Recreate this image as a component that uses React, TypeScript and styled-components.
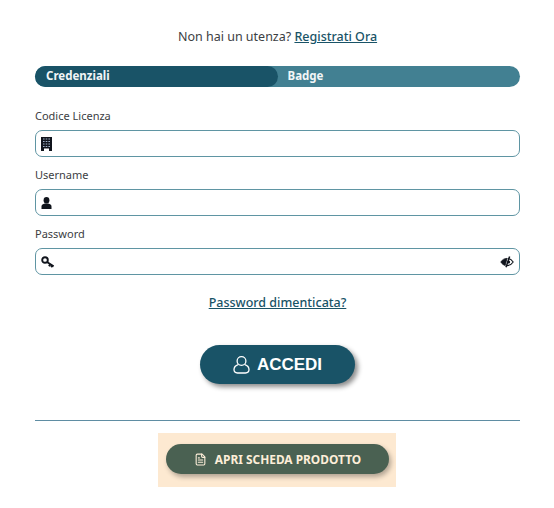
import React from 'react';
import styled, { createGlobalStyle } from 'styled-components';
import { LuFileText } from 'react-icons/lu';

const palette = {
  navy: '#195367',
  teal: '#428092',
  border: '#5f95a3',
  text: '#3c4043',
  ink: '#10141c',
  green: '#4a6152',
  peach: '#fde9d1',
  cream: '#fdeed9',
};

const GlobalStyle = createGlobalStyle`
  html, body {
    margin: 0;
    padding: 0;
    background: #fff;
    font-family: "Noto Sans", "Open Sans", sans-serif;
  }
`;

const Page = styled.div`
  width: 554px;
  height: 508px;
  box-sizing: border-box;
  padding: 28px 34px 0 35px;
  overflow: hidden;
`;

const SignupLine = styled.p`
  margin: 0;
  height: 17px;
  line-height: 17px;
  font-size: 12.5px;
  text-align: center;
  color: ${palette.text};
  a {
    color: ${palette.navy};
    font-weight: 500;
    text-decoration: underline;
  }
`;

const Tabs = styled.div`
  display: flex;
  height: 21px;
  margin: 21px 0 21px;
  border-radius: 11px;
  background: ${palette.teal};
`;

const Tab = styled.div<{ $active?: boolean }>`
  width: 243px;
  box-sizing: border-box;
  padding-left: ${(p) => (p.$active ? '11px' : '10px')};
  border-radius: 11px;
  background: ${(p) => (p.$active ? palette.navy : 'transparent')};
  color: #f2f6f7;
  font-size: 11.5px;
  font-weight: 700;
  line-height: 20px;
`;

const Field = styled.div`
  margin-bottom: 10px;
`;

const Label = styled.label`
  display: block;
  height: 15px;
  margin-bottom: 7px;
  line-height: 15px;
  font-size: 11px;
  color: ${palette.text};
`;

const InputBox = styled.div`
  display: flex;
  align-items: center;
  justify-content: space-between;
  height: 27px;
  box-sizing: border-box;
  padding: 0 5px;
  border: 1px solid ${palette.border};
  border-radius: 7px;
  color: ${palette.ink};
`;

const LinkRow = styled.div`
  margin-top: 19px;
  height: 17px;
  line-height: 17px;
  text-align: center;
  font-size: 12.5px;
  a {
    color: ${palette.navy};
    font-weight: 500;
    text-decoration: underline;
  }
`;

const ButtonRow = styled.div`
  display: flex;
  justify-content: center;
  margin-top: 34px;
`;

const LoginButton = styled.button`
  display: flex;
  align-items: center;
  justify-content: center;
  gap: 7px;
  width: 155px;
  height: 39px;
  padding: 0;
  border: 0;
  border-radius: 20px;
  background: ${palette.navy};
  color: #fff;
  font-family: "Liberation Sans", Arial, sans-serif;
  font-size: 17px;
  font-weight: 700;
  box-shadow: 3px 3px 5px rgba(0, 0, 0, 0.45);
`;

const Divider = styled.hr`
  height: 1px;
  margin: 36px 0 12px;
  border: 0;
  background: #5f8da3;
`;

const Promo = styled.div`
  display: flex;
  justify-content: center;
  padding-right: 1px;
`;

const PromoBox = styled.div`
  width: 238px;
  height: 54px;
  box-sizing: border-box;
  padding: 11px 7px 0 8px;
  background: ${palette.peach};
`;

const PromoButton = styled.button`
  display: flex;
  align-items: center;
  justify-content: center;
  gap: 8px;
  width: 223px;
  height: 30px;
  padding: 0;
  border: 0;
  border-radius: 15px;
  background: ${palette.green};
  color: ${palette.cream};
  font-family: "Noto Sans", sans-serif;
  font-size: 11.9px;
  font-weight: 700;
  box-shadow: 2px 3px 5px rgba(0, 0, 0, 0.3);
`;

const UserOutline = () => (
  <svg width="17" height="19" viewBox="0 0 17 19" fill="none" stroke="currentColor" strokeWidth="1.3">
    <circle cx="8.5" cy="6" r="4.4" />
    <path d="M5.2 9.6C2.6 10.4 1 12.3 1 14.6 1 16.8 2.4 18 4.5 18h8c2.1 0 3.5-1.2 3.5-3.4 0-2.3-1.6-4.2-4.2-5" />
  </svg>
);

const BuildingIcon = () => (
  <svg width="11" height="14" viewBox="0 0 11 14">
    <rect width="11" height="14" fill="currentColor" />
    <path
      d="M2 2h7M2 4.5h7M2 7h7M2 9.5h7"
      stroke="#9fb0c8"
      strokeWidth="1"
      strokeDasharray="1.6 1.1"
    />
    <rect x="3" y="11.5" width="5" height="2.5" fill="#fff" />
  </svg>
);

const UserIcon = () => (
  <svg width="11" height="12" viewBox="0 0 11 12" fill="currentColor">
    <ellipse cx="5.5" cy="3.2" rx="2.9" ry="3.2" />
    <path d="M0.5 12V9.6C0.5 7.8 2 7 3.8 6.6h3.4C9 7 10.5 7.8 10.5 9.6V12z" />
  </svg>
);

const KeyIcon = () => (
  <svg width="14" height="12" viewBox="0 0 14 12" fill="none" stroke="currentColor">
    <circle cx="4" cy="4" r="2.8" strokeWidth="1.9" />
    <path d="M6 6l6.6 4.4M9.2 8.2l-1.2 2M11.2 9.5l-1 1.7" strokeWidth="1.9" />
  </svg>
);

const EyeSlashIcon = () => (
  <svg width="14" height="12" viewBox="0 0 14 12" fill="none" stroke="currentColor">
    <path d="M0.8 6C2.4 3.6 4.4 2.4 7 2.4L5.2 9.4C3.4 9 1.9 7.8 0.8 6z" fill="currentColor" strokeWidth="0.8" />
    <path d="M7.6 2.5C10 2.6 11.8 3.9 13.2 6 11.8 8.2 9.8 9.5 7 9.6" strokeWidth="1.1" />
    <path d="M9.6 0.6L6 11.2" strokeWidth="1.5" />
    <circle cx="8.6" cy="6" r="1.5" fill="currentColor" stroke="none" />
  </svg>
);

const App: React.FC = () => {
  return (
    <Page>
      <GlobalStyle />
      <SignupLine>
        Non hai un utenza? <a href="#">Registrati Ora</a>
      </SignupLine>
      <Tabs>
        <Tab $active>Credenziali</Tab>
        <Tab>Badge</Tab>
      </Tabs>
      <Field>
        <Label>Codice Licenza</Label>
        <InputBox>
          <BuildingIcon />
        </InputBox>
      </Field>
      <Field>
        <Label>Username</Label>
        <InputBox>
          <UserIcon />
        </InputBox>
      </Field>
      <Field>
        <Label>Password</Label>
        <InputBox>
          <KeyIcon />
          <EyeSlashIcon />
        </InputBox>
      </Field>
      <LinkRow>
        <a href="#">Password dimenticata?</a>
      </LinkRow>
      <ButtonRow>
        <LoginButton>
          <UserOutline />
          ACCEDI
        </LoginButton>
      </ButtonRow>
      <Divider />
      <Promo>
        <PromoBox>
          <PromoButton>
            <LuFileText size={13} />
            APRI SCHEDA PRODOTTO
          </PromoButton>
        </PromoBox>
      </Promo>
    </Page>
  );
};

export default App;
